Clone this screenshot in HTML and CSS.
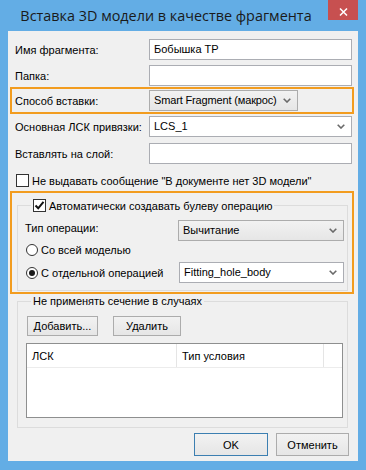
FILE: index.html
```html
<!DOCTYPE html>
<html lang="ru">
<head>
<meta charset="utf-8">
<title>Вставка 3D модели в качестве фрагмента</title>
<link rel="stylesheet" href="styles.css">
</head>
<body>
<div class="window">
  <div class="titlebar">
    <div class="title">Вставка 3D модели в качестве фрагмента</div>
    <div class="close"><svg width="9" height="8" viewBox="0 0 9 8"><path d="M1 0.5 L8 7.5 M8 0.5 L1 7.5" stroke="#fff" stroke-width="1.5" fill="none"/></svg></div>
  </div>
  <div class="client">
    <div class="row r1"><span class="lbl">Имя фрагмента:</span><div class="edit">Бобышка ТР</div></div>
    <div class="row r2"><span class="lbl">Папка:</span><div class="edit"></div></div>
    <div class="row hl r3"><span class="lbl">Способ вставки:</span><div class="combo btnlike w148"><span class="val tight">Smart Fragment (макрос)</span><svg class="chev" width="8" height="5" viewBox="0 0 8 5"><path d="M0.7 0.7 L4 4 L7.3 0.7" stroke="#6a6a6a" stroke-width="1.6" fill="none"/></svg></div></div>
    <div class="row r4"><span class="lbl">Основная ЛСК привязки:</span><div class="combo white"><span class="val">LCS_1</span><svg class="chev" width="8" height="5" viewBox="0 0 8 5"><path d="M0.7 0.7 L4 4 L7.3 0.7" stroke="#6a6a6a" stroke-width="1.6" fill="none"/></svg></div></div>
    <div class="row r5"><span class="lbl">Вставлять на слой:</span><div class="edit"></div></div>
    <div class="check r6"><span class="box"></span><span>Не выдавать сообщение "В документе нет 3D модели"</span></div>
    <div class="hl2">
      <fieldset class="grp1">
        <legend><span class="check"><span class="box"><svg width="11" height="11" viewBox="0 0 11 11"><path d="M1.5 5.5 L4.2 8.3 L9.5 1.8" stroke="#111" stroke-width="2" fill="none"/></svg></span><span>Автоматически создавать булеву операцию</span></span></legend>
        <div class="op-row">
          <span class="lbl2 top">Тип операции:</span>
          <div class="combo btnlike"><span class="val">Вычитание</span><svg class="chev" width="8" height="5" viewBox="0 0 8 5"><path d="M0.7 0.7 L4 4 L7.3 0.7" stroke="#6a6a6a" stroke-width="1.6" fill="none"/></svg></div>
        </div>
        <div class="radio rad1"><span class="circ"></span><span>Со всей моделью</span></div>
        <div class="op-row rad2">
          <div class="radio lbl2"><span class="circ on"></span><span>С отдельной операцией</span></div>
          <div class="combo white"><span class="val">Fitting_hole_body</span><svg class="chev" width="8" height="5" viewBox="0 0 8 5"><path d="M0.7 0.7 L4 4 L7.3 0.7" stroke="#6a6a6a" stroke-width="1.6" fill="none"/></svg></div>
        </div>
      </fieldset>
    </div>
    <fieldset class="grp2">
      <legend>Не применять сечение в случаях</legend>
      <div class="btns"><div class="btn add">Добавить...</div><div class="btn del">Удалить</div></div>
      <div class="list">
        <div class="hdr"><span class="c1">ЛСК</span><span class="c2">Тип условия</span><span class="c3"></span></div>
      </div>
    </fieldset>
    <div class="footer"><div class="btn ok">OK</div><div class="btn cancel">Отменить</div></div>
  </div>
</div>
</body>
</html>
```

FILE: styles.css
```css
* { box-sizing: border-box; }
html, body { margin: 0; padding: 0; }
body {
  width: 366px;
  height: 470px;
  overflow: hidden;
  background: #63ade5;
  font-family: "Liberation Sans", Arial, sans-serif;
  font-size: 11px;
  color: #000;
}
.window {
  width: 366px;
  height: 470px;
  background: #63ade5;
  display: flex;
  flex-direction: column;
}
.titlebar {
  height: 31px;
  display: flex;
  align-items: flex-start;
}
.title {
  flex: 1;
  text-align: center;
  font-family: "Open Sans", "Noto Sans", sans-serif;
  font-size: 14.4px;
  line-height: 32px;
  color: #1a1a1a;
  padding-left: 4px;
}
.close {
  width: 30px;
  height: 20px;
  margin-right: 8px;
  background: #c75050;
  display: flex;
  align-items: center;
  justify-content: center;
  padding-top: 3px;
}
.client {
  margin: 0 8px;
  height: 430px;
  background: #f0f0f0;
  padding: 8px 0 5px 0;
  display: flex;
  flex-direction: column;
}
.row {
  display: flex;
  align-items: center;
  height: 21px;
  padding: 0 6px 0 7px;
  flex: none;
}
.lbl { width: 134px; flex: none; }
.edit {
  flex: 1;
  height: 21px;
  border: 1px solid #abadb3;
  background: #fff;
  padding: 0 4px;
  line-height: 19px;
}
.combo {
  height: 21px;
  display: flex;
  align-items: center;
  justify-content: space-between;
  padding: 0 6px 0 4px;
  flex: 1;
}
.combo .val { line-height: 19px; }
.combo .val.tight { letter-spacing: -0.15px; }
.combo.white { background: #fff; border: 1px solid #abadb3; }
.combo.btnlike {
  background: linear-gradient(#f2f2f2, #e6e6e6);
  border: 1px solid #acacac;
}
.combo.w148 { flex: none; width: 149px; }
.r2 { margin-top: 5px; }
.hl {
  margin: 1px 4px 0 2px;
  border: 2px solid #f29c1f;
  height: 27px;
  padding: 1px 6px 1px 3px;
}
.r4 { margin-top: 2px; }
.r5 { margin-top: 6px; }
.check { display: flex; align-items: center; gap: 3px; }
.box {
  width: 13px;
  height: 13px;
  border: 1px solid #333;
  background: #fff;
  display: flex;
  align-items: center;
  justify-content: center;
  flex: none;
}
.r6 { margin-top: 10px; padding-left: 8px; height: 13px; }
.hl2 {
  margin: 4px 4px 0 2px;
  border: 2px solid #f29c1f;
  height: 103px;
  padding: 6px 4px 0 5px;
}
fieldset {
  margin: 0;
  border: 1px solid #dcdcdc;
  min-width: 0;
}
.grp1 {
  height: 92px;
  padding: 8px 3px 0 7px;
}
.grp1 legend { padding: 0 2px; margin-left: 6px; height: 13px; }
.op-row { display: flex; align-items: center; height: 21px; }
.lbl2 { width: 153px; flex: none; }
.lbl2.top { align-self: flex-start; padding-top: 2px; }
.radio { display: flex; align-items: center; gap: 3px; }
.circ {
  width: 12px;
  height: 12px;
  border: 1px solid #333;
  border-radius: 50%;
  background: #fff;
  flex: none;
  display: flex;
  align-items: center;
  justify-content: center;
}
.circ.on::after {
  content: "";
  width: 6px;
  height: 6px;
  border-radius: 50%;
  background: #1a1a1a;
}
.rad1 { margin-top: 2px; height: 14px; margin-left: 1px; }
.rad2 { margin-top: 5px; }
.rad2 .radio { margin-left: 1px; }
.grp2 {
  margin: 1px 10px 0 9px;
  height: 133px;
  padding: 8px 4px 0 8px;
}
.grp2 legend { padding: 0 2px; margin-left: 5px; height: 13px; line-height: 13px; }
.btn {
  border: 1px solid #acacac;
  background: linear-gradient(#f2f2f2, #e6e6e6);
  display: flex;
  align-items: center;
  justify-content: center;
}
.btns { display: flex; gap: 15px; padding-left: 1px; }
.btns .btn { height: 20px; }
.add { width: 71px; }
.del { width: 68px; }
.list {
  margin-top: 7px;
  height: 75px;
  border: 1px solid #8e8f8f;
  background: #fff;
}
.hdr { display: flex; height: 24px; border-bottom: 1px solid #ececec; }
.hdr span { display: flex; align-items: center; padding-left: 5px; border-right: 1px solid #e5e5e5; }
.c1 { width: 150px; }
.c2 { width: 147px; }
.c3 { flex: 1; border-right: none !important; }
.footer {
  display: flex;
  justify-content: flex-end;
  gap: 8px;
  margin-top: 5px;
  padding-right: 9px;
}
.footer .btn { height: 23px; }
.ok { width: 74px; border-color: #3c7fb1 !important; }
.cancel { width: 73px; }
```
